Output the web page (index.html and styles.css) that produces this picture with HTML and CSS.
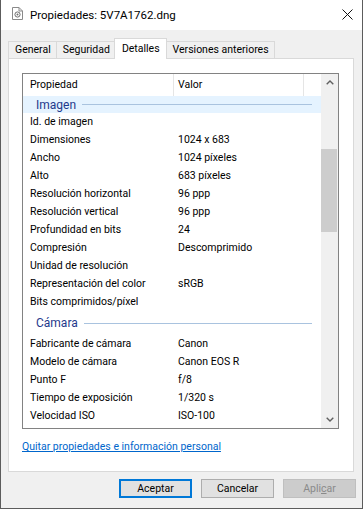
FILE: index.html
```html
<!DOCTYPE html>
<html lang="es">
<head>
  <meta charset="UTF-8">
  <meta name="viewport" content="width=device-width, initial-scale=1.0">
  <title>Propiedades: 5V7A1762.dng</title>
  <link rel="stylesheet" href="styles.css">
</head>
<body>
<div class="window">
  <div class="titlebar">
    <svg class="file-icon" width="11" height="13" viewBox="0 0 11 13">
      <path d="M0.5 0.5 H7 L10.5 4 V12.5 H0.5 Z" fill="#fff" stroke="#8a8a8a"/>
      <path d="M7 0.5 V4 H10.5" fill="none" stroke="#8a8a8a"/>
      <circle cx="5.5" cy="7.5" r="2.6" fill="none" stroke="#6d6d6d" stroke-width="1"/>
      <circle cx="5.5" cy="7.5" r="1" fill="#6d6d6d"/>
    </svg>
    <span class="title">Propiedades: 5V7A1762.dng</span>
    <svg class="close" width="11" height="11" viewBox="0 0 11 11">
      <path d="M0.5 0.5 L10.5 10.5 M10.5 0.5 L0.5 10.5" stroke="#111" stroke-width="1"/>
    </svg>
  </div>

  <div class="tabs">
    <div class="tab">General</div>
    <div class="tab">Seguridad</div>
    <div class="tab active">Detalles</div>
    <div class="tab">Versiones anteriores</div>
  </div>

  <div class="panel">
    <div class="list">
      <div class="list-main">
        <div class="list-head">
          <div class="col-name">Propiedad</div>
          <div class="col-value">Valor</div>
          <div class="col-rest"></div>
        </div>
        <div class="list-body">
          <div class="group first hover"><span>Imagen</span></div>
          <div class="row"><span class="name">Id. de imagen</span><span class="value"></span></div>
          <div class="row"><span class="name">Dimensiones</span><span class="value">1024 x 683</span></div>
          <div class="row"><span class="name">Ancho</span><span class="value">1024 píxeles</span></div>
          <div class="row"><span class="name">Alto</span><span class="value">683 píxeles</span></div>
          <div class="row"><span class="name">Resolución horizontal</span><span class="value">96 ppp</span></div>
          <div class="row"><span class="name">Resolución vertical</span><span class="value">96 ppp</span></div>
          <div class="row"><span class="name">Profundidad en bits</span><span class="value">24</span></div>
          <div class="row"><span class="name">Compresión</span><span class="value">Descomprimido</span></div>
          <div class="row"><span class="name">Unidad de resolución</span><span class="value"></span></div>
          <div class="row"><span class="name">Representación del color</span><span class="value">sRGB</span></div>
          <div class="row"><span class="name">Bits comprimidos/píxel</span><span class="value"></span></div>
          <div class="group"><span>Cámara</span></div>
          <div class="row"><span class="name">Fabricante de cámara</span><span class="value">Canon</span></div>
          <div class="row"><span class="name">Modelo de cámara</span><span class="value">Canon EOS R</span></div>
          <div class="row"><span class="name">Punto F</span><span class="value">f/8</span></div>
          <div class="row"><span class="name">Tiempo de exposición</span><span class="value">1/320 s</span></div>
          <div class="row"><span class="name">Velocidad ISO</span><span class="value">ISO-100</span></div>
        </div>
      </div>
      <div class="scrollbar">
        <div class="sb-btn">
          <svg width="8" height="5" viewBox="0 0 8 5"><path d="M0.7 4.3 L4 1 L7.3 4.3" fill="none" stroke="#606060" stroke-width="1.4"/></svg>
        </div>
        <div class="sb-track">
          <div class="sb-thumb"></div>
        </div>
        <div class="sb-btn">
          <svg width="8" height="5" viewBox="0 0 8 5"><path d="M0.7 0.7 L4 4 L7.3 0.7" fill="none" stroke="#606060" stroke-width="1.4"/></svg>
        </div>
      </div>
    </div>
    <a class="link" href="#">Quitar propiedades e información personal</a>
  </div>

  <div class="buttons">
    <button class="btn default">Aceptar</button>
    <button class="btn">Cancelar</button>
    <button class="btn disabled">Apli<u>c</u>ar</button>
  </div>
</div>
</body>
</html>
```

FILE: styles.css
```css
body {
    margin: 0;
    font-family: Roboto, "Liberation Sans", Arial, sans-serif;
    font-size: 10.5px;
    color: #000;
}

.window {
    width: 363px;
    height: 509px;
    box-sizing: border-box;
    background-color: #f0f0f0;
    border: 1px solid #5c5c5c;
    border-top: none;
    display: flex;
    flex-direction: column;
}

.titlebar {
    height: 30px;
    background-color: #fff;
    display: flex;
    align-items: center;
    padding-left: 11px;
    padding-right: 9px;
}

.file-icon {
    margin-top: -3px;
}

.title {
    font-size: 11.5px;
    margin-left: 7px;
    flex: 1;
}

.close {
    margin-top: -2px;
}

/* onglets */
.tabs {
    height: 28px;
    display: flex;
    align-items: flex-end;
    padding-left: 7px;
}

.tab {
    height: 17px;
    box-sizing: border-box;
    line-height: 16px;
    padding: 0 5px 0 6px;
    border: 1px solid #d9d9d9;
    border-bottom: none;
    margin-right: -1px;
    background-color: #f0f0f0;
}

.tab.active {
    height: 21px;
    padding: 2px 6px 0 7px;
    margin-bottom: -1px;
    margin-left: -1px;
    background-color: #fff;
    position: relative;
    z-index: 1;
}

.panel {
    height: 414px;
    box-sizing: border-box;
    margin: 0 8px 0 7px;
    background-color: #fff;
    border: 1px solid #d9d9d9;
    display: flex;
    flex-direction: column;
}

/* liste des propriétés */
.list {
    height: 356px;
    box-sizing: border-box;
    margin: 14px 14px 0 13px;
    border: 1px solid #828282;
    display: flex;
}

.list-main {
    flex: 1;
    display: flex;
    flex-direction: column;
    min-width: 0;
}

.list-head {
    height: 22px;
    display: flex;
    line-height: 22px;
}

.col-name {
    width: 151px;
    box-sizing: border-box;
    padding-left: 7px;
    border-right: 1px solid #e5e5e5;
}

.col-value {
    width: 130px;
    box-sizing: border-box;
    padding-left: 4px;
    border-right: 1px solid #e5e5e5;
}

.col-rest {
    flex: 1;
}

.list-body {
    flex: 1;
    overflow: hidden;
}

.row {
    height: 18px;
    line-height: 18px;
    display: flex;
    white-space: nowrap;
}

.name {
    width: 148px;
    padding-left: 7px;
    flex-shrink: 0;
}

.group {
    height: 24px;
    display: flex;
    align-items: center;
    padding: 0 9px 0 13px;
    font-size: 12px;
    color: #1f3a8c;
}

.group.first {
    height: 17px;
    margin-bottom: 0;
}

.group::after {
    content: "";
    flex: 1;
    height: 1px;
    margin-left: 6px;
    background-color: #a9c3df;
}

.group.hover {
    background-color: #e5f3ff;
}

/* barre de défilement */
.scrollbar {
    width: 17px;
    background-color: #f0f0f0;
    display: flex;
    flex-direction: column;
}

.sb-btn {
    height: 17px;
    display: flex;
    align-items: center;
    justify-content: center;
}

.sb-track {
    flex: 1;
}

.sb-thumb {
    height: 83px;
    margin: 58px 1px 0 0;
    background-color: #cdcdcd;
}

.link {
    margin: 10px 0 0 13px;
    line-height: 15px;
    color: #0066cc;
    align-self: flex-start;
}

/* boutons */
.buttons {
    display: flex;
    justify-content: flex-end;
    gap: 9px;
    margin-top: 7px;
    padding-right: 6px;
}

.btn {
    width: 73px;
    height: 19px;
    box-sizing: border-box;
    padding: 0;
    font-family: Roboto, "Liberation Sans", Arial, sans-serif;
    font-size: 10.5px;
    color: #000;
    background-color: #e1e1e1;
    border: 1px solid #adadad;
}

.btn.default {
    border: 2px solid #0078d7;
}

.btn.disabled {
    background-color: #cccccc;
    border-color: #bfbfbf;
    color: #8a8a8a;
}
```
